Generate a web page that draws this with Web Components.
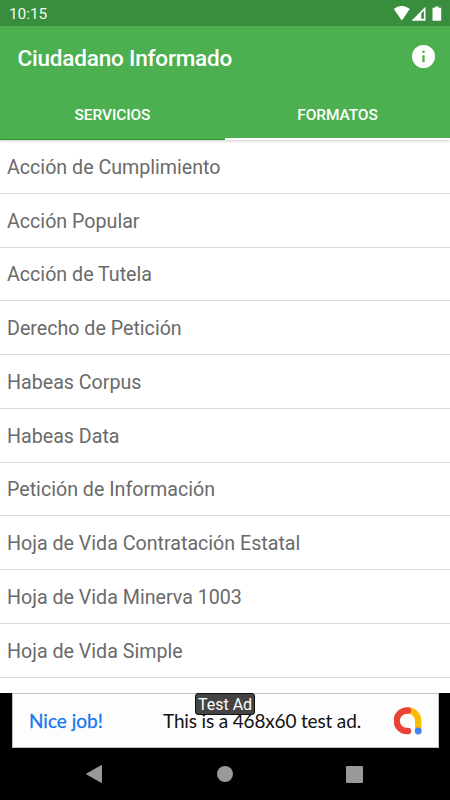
<!DOCTYPE html>
<html lang="es">
<head>
<meta charset="utf-8">
<title>Ciudadano Informado</title>
<style>
  html, body { margin: 0; height: 100%; overflow: hidden; }
  body { font-family: Roboto, "Liberation Sans", sans-serif; background: #000; }
</style>
</head>
<body>
<ci-app>
  <ci-status-bar slot="status">10:15</ci-status-bar>
  <ci-toolbar slot="toolbar">Ciudadano Informado</ci-toolbar>
  <ci-tabs slot="tabs">
    <ci-tab>SERVICIOS</ci-tab>
    <ci-tab active>FORMATOS</ci-tab>
  </ci-tabs>
  <ci-row>Acción de Cumplimiento</ci-row>
  <ci-row>Acción Popular</ci-row>
  <ci-row>Acción de Tutela</ci-row>
  <ci-row>Derecho de Petición</ci-row>
  <ci-row>Habeas Corpus</ci-row>
  <ci-row>Habeas Data</ci-row>
  <ci-row>Petición de Información</ci-row>
  <ci-row>Hoja de Vida Contratación Estatal</ci-row>
  <ci-row>Hoja de Vida Minerva 1003</ci-row>
  <ci-row>Hoja de Vida Simple</ci-row>
  <ci-ad slot="ad">
    <span slot="lead">Nice job!</span>
    <span slot="text">This is a 468x60 test ad.</span>
    <span slot="badge">Test Ad</span>
  </ci-ad>
  <ci-nav slot="nav"></ci-nav>
</ci-app>

<script>
function define(name, html) {
  const template = document.createElement('template');
  template.innerHTML = html;
  customElements.define(name, class extends HTMLElement {
    constructor() {
      super();
      this.attachShadow({ mode: 'open' });
      this.shadowRoot.appendChild(template.content.cloneNode(true));
    }
  });
}

define('ci-app', `
  <style>
    :host {
      display: flex;
      flex-direction: column;
      width: 450px;
      height: 800px;
      overflow: hidden;
      background: #000;
    }
    header {
      flex: none;
      background: #4caf50;
      box-shadow: 0 1px 3px rgba(0, 0, 0, 0.2);
      z-index: 1;
    }
    main {
      flex: 1;
      min-height: 0;
      overflow: hidden;
      background: #fff;
    }
  </style>
  <header>
    <slot name="status"></slot>
    <slot name="toolbar"></slot>
    <slot name="tabs"></slot>
  </header>
  <main><slot></slot></main>
  <slot name="ad"></slot>
  <slot name="nav"></slot>
`);

define('ci-status-bar', `
  <style>
    :host {
      display: flex;
      align-items: center;
      justify-content: space-between;
      box-sizing: border-box;
      height: 26px;
      padding: 2px 8px 0 9px;
      background: #388e3c;
      color: #f2f8f2;
      font-size: 15.5px;
      letter-spacing: -0.1px;
      line-height: 24px;
    }
    svg { display: block; margin-top: -1px; }
  </style>
  <span><slot></slot></span>
  <svg width="49" height="16" viewBox="0 0 49 16" fill="#fff">
    <path d="M.8 2.4Q8.8-4 16.8 2.4L8.8 13.8Z" transform="translate(0 .7)"/>
    <path d="M18.5 14.8 32.5.8V14.8Z"/>
    <path d="M28.3 7.3 30.9 4.8V12.8H28.3Z" fill="#388e3c"/>
    <path d="M42.2 .5H45.6V1.7H48.2V14.8H39.5V1.7H42.2Z"/>
  </svg>
`);

define('ci-toolbar', `
  <style>
    :host {
      display: flex;
      align-items: center;
      justify-content: space-between;
      box-sizing: border-box;
      height: 62px;
      padding: 0 15px 0 17.5px;
      color: #fff;
      font-size: 22.5px;
      font-weight: 500;
      letter-spacing: -0.19px;
    }
    span { padding-top: 1px; }
    svg { display: block; margin-top: -1px; }
  </style>
  <span><slot></slot></span>
  <svg width="23" height="23" viewBox="2 2 20 20" fill="#fff">
    <path d="M12 2a10 10 0 1 0 0 20 10 10 0 0 0 0-20zm1 15h-2v-6h2zm0-8h-2V7h2z"/>
  </svg>
`);

define('ci-tabs', `
  <style>
    :host {
      display: grid;
      grid-template-columns: 1fr 1fr;
      height: 52px;
      box-sizing: border-box;
      border-bottom: 1px solid #259b29;
    }
  </style>
  <slot></slot>
`);

define('ci-tab', `
  <style>
    :host {
      display: flex;
      align-items: center;
      justify-content: center;
      box-sizing: border-box;
      height: 52px;
      padding-top: 1px;
      color: #fff;
      font-size: 15.5px;
      font-weight: 500;
      letter-spacing: -0.1px;
    }
    :host([active]) {
      border-bottom: 2px solid #fff;
      padding-top: 3px;
    }
  </style>
  <slot></slot>
`);

define('ci-row', `
  <style>
    :host {
      display: flex;
      align-items: center;
      box-sizing: border-box;
      height: 53.75px;
      padding: 2px 0 0 7px;
      border-bottom: 1px solid #dcdcdc;
      color: #6a6a6a;
      font-size: 19.65px;
      white-space: nowrap;
    }
  </style>
  <slot></slot>
`);

define('ci-ad', `
  <style>
    :host {
      display: block;
      flex: none;
      position: relative;
      box-sizing: border-box;
      height: 55px;
      margin: 0 11px 0 12px;
      background: #fdfdfd;
      border: 1px solid #b8c8ca;
      color: #111;
      font-family: Lato, Roboto, sans-serif;
      font-size: 19px;
    }
    .line {
      display: flex;
      align-items: center;
      height: 53px;
      padding: 0 16px;
      white-space: nowrap;
    }
    .line span { padding-bottom: 1px; }
    .lead {
      width: 134px;
      color: #1a76f0;
      -webkit-text-stroke: 0.3px #1a76f0;
    }
    .text { letter-spacing: -0.16px; }
    .badge {
      position: absolute;
      top: -1px;
      left: 182px;
      box-sizing: border-box;
      width: 60px;
      height: 22px;
      border: 1px solid #111;
      border-radius: 3px;
      background: #444;
      color: #fff;
      font-family: Roboto, sans-serif;
      font-size: 16px;
      line-height: 22px;
      text-align: center;
      white-space: nowrap;
    }
    svg { display: block; margin-left: auto; }
  </style>
  <div class="line">
    <span class="lead"><slot name="lead"></slot></span>
    <span class="text"><slot name="text"></slot></span>
    <svg width="28" height="28" viewBox="0 0 28 28" fill="none" stroke-linecap="round">
      <path d="M14 3.5A10.2 10.2 0 0 1 24.2 13.7V24" stroke="#fbbc04" stroke-width="6.4"/>
      <path d="M14 3.5A10.3 10.3 0 1 0 14 24" stroke="#ea4335" stroke-width="6.4"/>
      <circle cx="24.2" cy="24" r="3.4" fill="#4285f4"/>
    </svg>
  </div>
  <div class="badge"><slot name="badge"></slot></div>
`);

define('ci-nav', `
  <style>
    :host {
      display: flex;
      flex: none;
      align-items: center;
      justify-content: space-between;
      box-sizing: border-box;
      height: 52px;
      padding: 0 87px 0 86px;
      background: #000;
    }
    svg { display: block; }
  </style>
  <svg width="16" height="18" viewBox="0 0 16 18"><path d="M15.5.5V17.5L.5 9Z" fill="#999" stroke="#999" stroke-linejoin="round"/></svg>
  <svg width="16" height="16" viewBox="0 0 16 16" style="margin-left: 2px"><circle cx="8" cy="8" r="8" fill="#999"/></svg>
  <svg width="17" height="17" viewBox="0 0 17 17"><rect width="17" height="17" rx="1" fill="#999"/></svg>
`);
</script>
</body>
</html>
